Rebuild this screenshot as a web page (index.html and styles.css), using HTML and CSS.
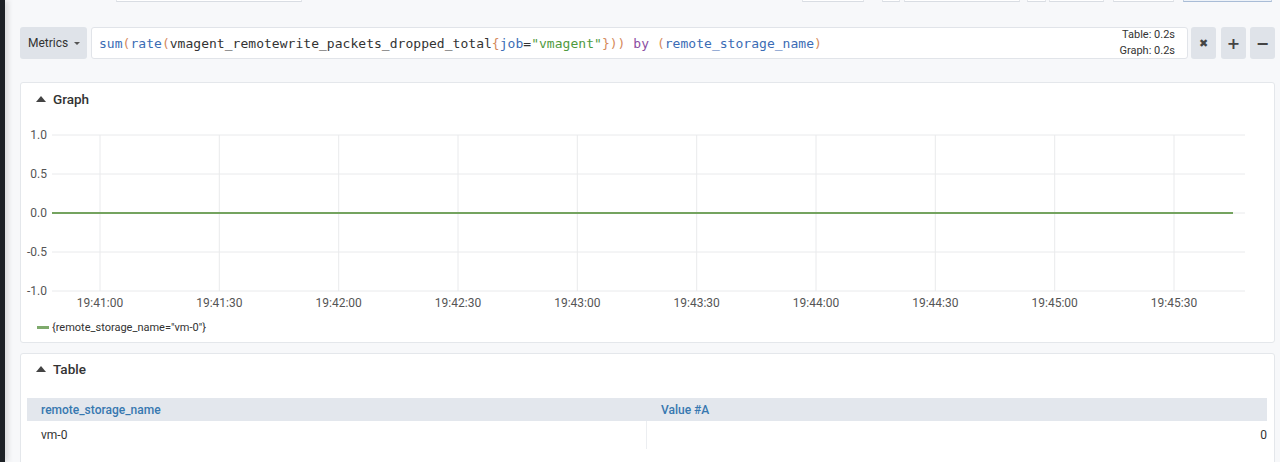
FILE: index.html
```html
<!DOCTYPE html>
<html>
<head>
<meta charset="utf-8">
<link rel="stylesheet" href="styles.css">
</head>
<body>
<div class="app">
  <div class="edge"></div>
  <div class="main">
    <div class="topbar">
      <div class="tb tb1"></div>
      <div class="tb-spacer"></div>
      <div class="tb tb2"></div>
      <div class="tb tb3"></div>
      <div class="tb tb4"></div>
      <div class="tb tb5"></div>
      <div class="tb tb6"></div>
      <div class="tb tb7"></div>
      <div class="tb tb8 primary"></div>
    </div>

    <div class="query-row">
      <button class="metrics-btn">Metrics <span class="caret"></span></button>
      <div class="query-input">
        <div class="expr"><span class="fn">sum</span><span class="par">(</span><span class="fn">rate</span><span class="par">(</span><span class="metric">vmagent_remotewrite_packets_dropped_total</span><span class="par">{</span><span class="lbl">job</span><span class="op">=</span><span class="str">"vmagent"</span><span class="par">}</span><span class="par">))</span> <span class="kw">by</span> <span class="par">(</span><span class="lbl">remote_storage_name</span><span class="par">)</span></div>
        <div class="timing"><div>Table: 0.2s</div><div>Graph: 0.2s</div></div>
      </div>
      <button class="icon-btn b-x">&#x2716;</button>
      <button class="icon-btn b-plus">+</button>
      <button class="icon-btn b-minus">&#x2212;</button>
    </div>

    <div class="card graph-card">
      <div class="card-head"><span class="tri"></span>Graph</div>
      <svg class="chart" width="1253" height="196" viewBox="0 0 1253 196">
        <g class="grid">
          <line x1="31" y1="16" x2="1224" y2="16"/>
          <line x1="31" y1="55" x2="1224" y2="55"/>
          <line x1="31" y1="94" x2="1224" y2="94"/>
          <line x1="31" y1="133" x2="1224" y2="133"/>
          <line x1="31" y1="172" x2="1224" y2="172"/>
          <line x1="79" y1="16" x2="79" y2="172"/>
          <line x1="198.3" y1="16" x2="198.3" y2="172"/>
          <line x1="317.7" y1="16" x2="317.7" y2="172"/>
          <line x1="437" y1="16" x2="437" y2="172"/>
          <line x1="556.3" y1="16" x2="556.3" y2="172"/>
          <line x1="675.7" y1="16" x2="675.7" y2="172"/>
          <line x1="795" y1="16" x2="795" y2="172"/>
          <line x1="914.3" y1="16" x2="914.3" y2="172"/>
          <line x1="1033.7" y1="16" x2="1033.7" y2="172"/>
          <line x1="1153" y1="16" x2="1153" y2="172"/>
        </g>
        <g class="ylabels">
          <text x="26" y="20">1.0</text>
          <text x="26" y="59">0.5</text>
          <text x="26" y="98">0.0</text>
          <text x="26" y="137">-0.5</text>
          <text x="26" y="176">-1.0</text>
        </g>
        <g class="xlabels">
          <text x="79" y="188">19:41:00</text>
          <text x="198.3" y="188">19:41:30</text>
          <text x="317.7" y="188">19:42:00</text>
          <text x="437" y="188">19:42:30</text>
          <text x="556.3" y="188">19:43:00</text>
          <text x="675.7" y="188">19:43:30</text>
          <text x="795" y="188">19:44:00</text>
          <text x="914.3" y="188">19:44:30</text>
          <text x="1033.7" y="188">19:45:00</text>
          <text x="1153" y="188">19:45:30</text>
        </g>
        <line class="series" x1="31" y1="94" x2="1212" y2="94"/>
      </svg>
      <div class="legend"><span class="swatch"></span>{remote_storage_name="vm-0"}</div>
    </div>

    <div class="card table-card">
      <div class="card-head"><span class="tri"></span>Table</div>
      <table class="data">
        <thead>
          <tr><th class="c1">remote_storage_name</th><th class="c2">Value #A</th></tr>
        </thead>
        <tbody>
          <tr><td class="c1">vm-0</td><td class="c2 num">0</td></tr>
        </tbody>
      </table>
    </div>
  </div>
</div>
</body>
</html>
```

FILE: styles.css
```css
* { box-sizing: border-box; }
html, body { margin: 0; padding: 0; }
body {
  background: #f7f8fa;
  font-family: Roboto, "Liberation Sans", Arial, sans-serif;
  color: #333;
  overflow: hidden;
  height: 462px;
}
.app { display: flex; height: 462px; }
.edge {
  width: 5px;
  flex: none;
  background: #1d2126;
  box-shadow: 2px 0 6px rgba(0,0,0,0.18);
}
.main {
  flex: 1;
  padding: 0 5px 0 15px;
  min-width: 0;
}

/* top bar remnants */
.topbar { display: flex; height: 2px; overflow: hidden; }
.tb { height: 2px; background: #fff; border-bottom: 1px solid #d9dde3; border-left: 1px solid #e3e6ea; border-right: 1px solid #e3e6ea; flex: none; }
.tb1 { margin-left: 96px; width: 186px; }
.tb-spacer { flex: 1; }
.tb2 { width: 62px; }
.tb3 { width: 18px; margin-left: 18px; }
.tb4 { width: 116px; margin-left: 4px; }
.tb5 { width: 19px; margin-left: 7px; }
.tb6 { width: 55px; margin-left: 3px; }
.tb7 { width: 61px; margin-left: 9px; }
.tb8 { width: 89px; margin-left: 9px; margin-right: 3px; }
.tb.primary { border-bottom-color: #a9bcd6; border-left-color: #c2cfe0; border-right-color: #c2cfe0; background: #eef3f9; }

/* query row */
.query-row {
  display: flex;
  align-items: stretch;
  height: 32px;
  margin-top: 25px;
}
.metrics-btn {
  width: 67px;
  flex: none;
  border: none;
  border-radius: 3px;
  background: #dfe3e9;
  color: #333;
  font-family: Roboto, "Liberation Sans", Arial, sans-serif;
  font-size: 12px;
  padding: 0 0 0 8px;
  text-align: left;
  display: flex;
  align-items: center;
}
.caret {
  display: inline-block;
  width: 0; height: 0;
  border-left: 3px solid transparent;
  border-right: 3px solid transparent;
  border-top: 3.5px solid #555;
  margin-left: 6px;
}
.query-input {
  flex: 1;
  margin-left: 4px;
  background: #fff;
  border: 1px solid #e1e4e9;
  border-radius: 3px;
  display: flex;
  align-items: center;
  justify-content: space-between;
  padding: 0 12px 0 7px;
  min-width: 0;
}
.expr {
  font-family: "DejaVu Sans Mono", "Liberation Mono", monospace;
  font-size: 13px;
  color: #333;
  white-space: pre;
  letter-spacing: 0.03px;
}
.fn { color: #3b6cb5; }
.par { color: #d58a5c; }
.metric { color: #333; }
.lbl { color: #3b6cb5; }
.op { color: #333; }
.str { color: #4f9a3e; }
.kw { color: #8b4fa3; }
.timing {
  text-align: right;
  font-size: 11px;
  line-height: 16px;
  color: #333;
}
.icon-btn {
  width: 25px;
  flex: none;
  border: none;
  border-radius: 3px;
  background: #dfe3e9;
  color: #444;
  font-family: "DejaVu Sans", Roboto, sans-serif;
  font-weight: bold;
  padding: 0;
  display: flex;
  align-items: center;
  justify-content: center;
}
.b-x { margin-left: 3px; font-size: 11px; }
.b-plus { margin-left: 5px; font-size: 16px; }
.b-minus { margin-left: 4px; font-size: 16px; }

/* cards */
.card {
  background: #fff;
  border: 1px solid #e4e7eb;
  border-radius: 3px;
}
.graph-card { margin-top: 23px; height: 261px; }
.table-card { margin-top: 10px; height: 120px; }
.card-head {
  height: 36px;
  display: flex;
  align-items: center;
  padding-left: 15px;
  padding-bottom: 4px;
  font-size: 13.5px;
  font-weight: 500;
  color: #333;
}
.table-card .card-head { height: 31px; padding-bottom: 1px; }
.tri {
  width: 0; height: 0;
  border-left: 5px solid transparent;
  border-right: 5px solid transparent;
  border-bottom: 6px solid #444;
  margin-right: 7px;
}

/* chart */
.chart { display: block; }
.grid line { stroke: #e9eaec; stroke-width: 1; }
.ylabels text { font-size: 12px; fill: #555; text-anchor: end; font-family: Roboto, "Liberation Sans", Arial, sans-serif; }
.xlabels text { font-size: 12px; fill: #555; text-anchor: middle; font-family: Roboto, "Liberation Sans", Arial, sans-serif; }
.series { stroke: #74a35f; stroke-width: 2; }
.legend {
  height: 24px;
  display: flex;
  align-items: center;
  padding-left: 16px;
  font-size: 11px;
  color: #333;
}
.swatch {
  width: 12px;
  height: 3px;
  background: #7eaa6c;
  margin-right: 3px;
}

/* table */
.data {
  margin: 13px 0 0 6px;
  width: 1240px;
  border-collapse: collapse;
  font-size: 12px;
}
.data th {
  background: #e3e7ed;
  color: #3778b0;
  font-weight: 500;
  text-align: left;
  height: 23px;
  padding: 0;
}
.data th.c1 { padding-left: 14px; width: 619px; }
.data th.c2 { padding-left: 15px; }
.data td {
  height: 28px;
  padding: 0;
  color: #333;
}
.data td.c1 { padding-left: 14px; }
.data td.c2 { border-left: 1px solid #eceef1; }
.data td.num { text-align: right; padding-right: 0; }
```
